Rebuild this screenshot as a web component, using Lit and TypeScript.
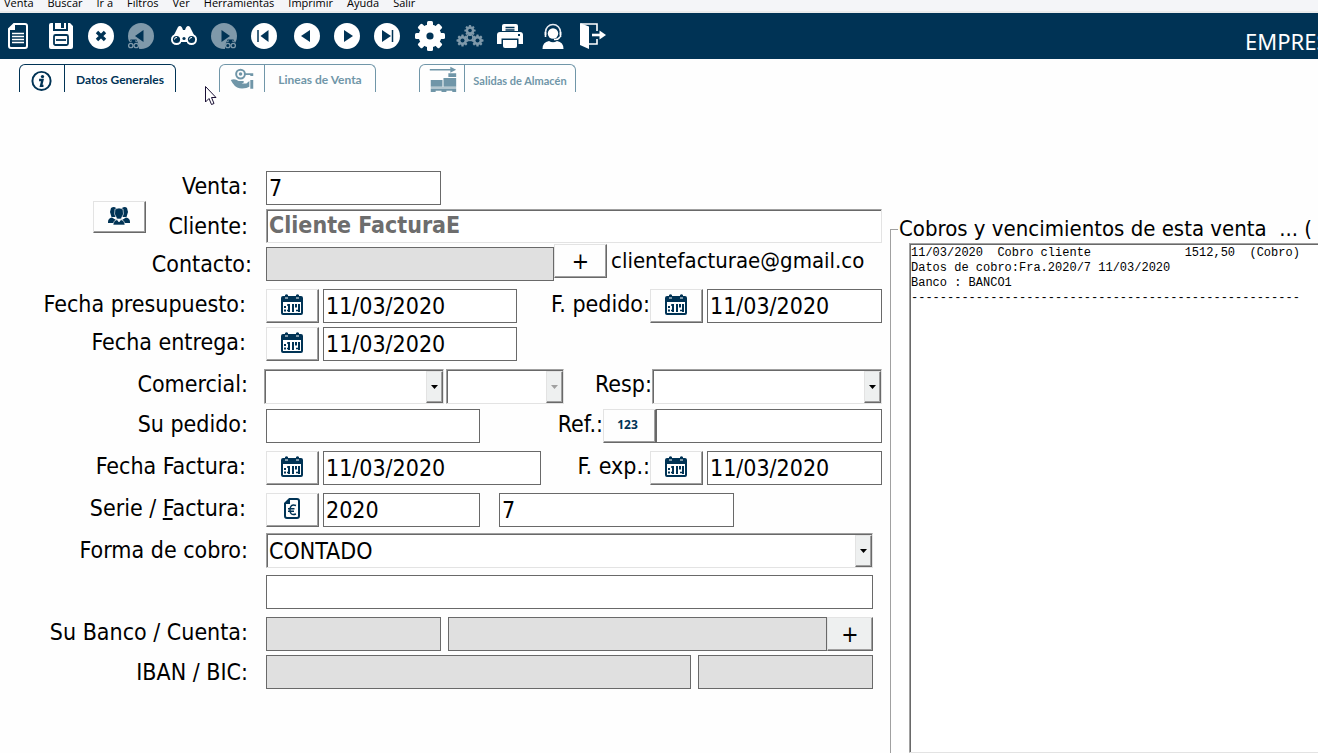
import { LitElement, html, css, svg } from "lit";
import { customElement, property } from "lit/decorators.js";
import { classMap } from "lit/directives/class-map.js";

const NAVY = "#003355";
const DIM = "#7f99aa";

const disc = (fill: string, inner: unknown) => svg`<circle cx="14" cy="14" r="13" fill=${fill} />${inner}`;

const miniBinoculars = (x: number) => svg`
  <g transform="translate(${x} 17)">
    <path d="M0 7 L2.5 .5 H8.500 L11 7 V10 H0Z" fill=${NAVY} />
    <circle cx="2.800" cy="6.500" r="2.200" fill=${NAVY} stroke=${DIM} stroke-width="1.300" />
    <circle cx="8.200" cy="6.500" r="2.200" fill=${NAVY} stroke=${DIM} stroke-width="1.300" />
    <path d="M2.500 3 L3.500 1.500 M8.500 3 L7.500 1.500" stroke=${DIM} stroke-width="1.300" />
  </g>`;

const gearPath = (cx: number, cy: number, r: number, tooth: number, fill: string, hole: number) => svg`
  <g transform="translate(${cx} ${cy})" fill=${fill}>
    ${[0, 45, 90, 135, 180, 225, 270, 315].map(
      (a) => svg`<rect x=${-tooth / 2} y=${-r} width=${tooth} height=${r} rx=${tooth / 4} transform="rotate(${a})" />`
    )}
    <circle r=${r * 0.76} />
    <circle r=${hole} fill=${NAVY} />
  </g>`;

const toolIcons: Record<string, unknown> = {
  doc: svg`
    <path d="M10 2 H21 Q23 2 23 4 V24 Q23 26 21 26 H7 Q5 26 5 24 V7Z" fill="none" stroke="#fff" stroke-width="2" />
    <path d="M4 8 L11 1 V8Z" fill="#fff" />
    <path d="M8 11.500 H20 M8 14.500 H20 M8 17.500 H20 M8 20.500 H20" stroke="#fff" stroke-width="1.500" />`,
  save: svg`
    <path d="M2 3 Q2 1 4 1 H6 V9 H21 V1 H23 L26 4 V25 Q26 27 24 27 H4 Q2 27 2 25Z" fill="#fff" />
    <path d="M8 1 H19 V7 H8Z" fill="#fff" />
    <rect x="14" y="1" width="3" height="5" fill=${NAVY} />
    <rect x="7" y="13" width="14" height="10" rx="1.500" fill="#fff" stroke=${NAVY} stroke-width="1.800" />
    <path d="M9 18 H19" stroke=${NAVY} stroke-width="1.800" />`,
  cancel: disc("#fff", svg`<path d="M10 10 L18 18 M18 10 L10 18" stroke=${NAVY} stroke-width="3.400" />`),
  findPrev: svg`${disc(DIM, svg`<path d="M16.500 8 V20 L8 14Z" fill=${NAVY} />`)}${miniBinoculars(1)}`,
  find: svg`
    <path d="M4 13 L8 5 Q10 3 12 5.500 L13 8 H15 L16 5.500 Q18 3 20 5 L24 13 L19 20 H9Z" fill="#fff" />
    <circle cx="6.500" cy="17.500" r="5.500" fill="#fff" /><circle cx="21.500" cy="17.500" r="5.500" fill="#fff" />
    <circle cx="6.500" cy="17.500" r="3.600" fill=${NAVY} /><circle cx="21.500" cy="17.500" r="3.600" fill=${NAVY} />
    <path d="M4.500 17.500 A2.200 2.200 0 0 1 7 15.500 M19.500 17.500 A2.200 2.200 0 0 1 22 15.500" stroke="#fff" fill="none" />
    <circle cx="14" cy="16.500" r="1.600" fill=${NAVY} /><path d="M11 20 H17 V24 H11Z" fill=${NAVY} />`,
  findNext: svg`${disc(DIM, svg`<path d="M11.500 8 V20 L20 14Z" fill=${NAVY} />`)}${miniBinoculars(15)}`,
  first: disc("#fff", svg`<path d="M18.500 8 V20 L10.500 14Z" fill=${NAVY} /><path d="M8 8 V20" stroke=${NAVY} stroke-width="1.500" />`),
  prev: disc("#fff", svg`<path d="M17 8 V20 L8 14Z" fill=${NAVY} />`),
  next: disc("#fff", svg`<path d="M11 8 V20 L20 14Z" fill=${NAVY} />`),
  last: disc("#fff", svg`<path d="M9 8 V20 L18 14Z" fill=${NAVY} /><path d="M19.500 8 V20" stroke=${NAVY} stroke-width="1.500" />`),
  gear: gearPath(14, 14, 15, 6, "#fff", 3.6),
  gears: svg`${gearPath(14, 8.5, 5.6, 2.2, DIM, 1.8)}${gearPath(6.5, 18.5, 6, 2.4, DIM, 2)}${gearPath(21.5, 18.5, 6, 2.4, DIM, 2)}
    <circle cx="14" cy="15.500" r="3" fill="none" stroke=${DIM} stroke-width="1.600" />`,
  print: svg`
    <path d="M6 9 V4 Q6 2 8 2 H20 Q22 2 22 4 V9Z" fill="#fff" />
    <path d="M9.500 5.500 H18.500 M9.500 8 H18.500" stroke=${NAVY} stroke-width="1.300" />
    <path d="M1 13 Q1 10 4 10 H24 Q27 10 27 13 V22 H1Z" fill="#fff" />
    <rect x="5.500" y="16.500" width="17" height="10" fill=${NAVY} />
    <path d="M7 18 H21 V24 Q21 26 19 26 H9 Q7 26 7 24Z" fill="#fff" />
    <rect x="22" y="12" width="2" height="2" fill=${NAVY} />`,
  agent: svg`
    <circle cx="14" cy="11.500" r="5.200" fill="#fff" />
    <path d="M6.500 13 V10 A7.500 7.500 0 0 1 21.500 10 V13" fill="none" stroke="#e6ebf2" stroke-width="1.600" />
    <path d="M6.500 10 V15 M21.500 10 V15 M21 15 Q19 18 15 17.500" fill="none" stroke="#fff" stroke-width="1.600" />
    <path d="M3.500 27 Q3.500 20 10 19 Q14 21.500 18 19 Q24.500 20 24.500 27Z" fill="#fff" />`,
  exit: svg`
    <path d="M1 1 L10 4.500 V27 L1 23Z" fill="#fff" />
    <path d="M2 2 H18 V9 M18 17 V22 H10" fill="none" stroke="#fff" stroke-width="1.600" />
    <path d="M13 13 H22" stroke="#fff" stroke-width="2.600" /><path d="M20.500 8.500 L27 13 L20.500 17.500Z" fill="#fff" />`,
};

const toolGroups: Array<Array<[string, string]>> = [
  [["doc", "Nuevo"]],
  [["save", "Guardar"], ["cancel", "Cancelar"], ["findPrev", "Buscar anterior"]],
  [["find", "Buscar"], ["findNext", "Buscar siguiente"], ["first", "Primero"]],
  [["prev", "Anterior"], ["next", "Siguiente"], ["last", "Último"]],
  [["gear", "Opciones"], ["gears", "Procesos"], ["print", "Imprimir"]],
  [["agent", "Soporte"], ["exit", "Salir"]],
];

const calendarIcon = svg`
  <svg width="22" height="21" viewBox="0 0 22 21" aria-hidden="true">
    <path d="M0 4 Q0 2 2 2 H4 V1 Q5.500 -.5 7 1 V2 H15 V1 Q16.500 -.5 18 1 V2 H20 Q22 2 22 4 V19 Q22 21 20 21 H2 Q0 21 0 19Z" fill=${NAVY} />
    <path d="M2 8 H20 V19 H2Z" fill="#fff" /><path d="M4 4 H7 M15 4 H18" stroke="#fff" stroke-width="1.200" />
    <path d="M3 13 H5 M3 16.500 H5 M8 10 V18 M12 10 V18 M15 10 V13.500 M18 10 V18" stroke=${NAVY} stroke-width="2" />
    <path d="M6 16.500 H8 M6 11 H8 M15 16.500 H18" stroke=${NAVY} stroke-width="1.600" />
  </svg>`;

const usersIcon = svg`
  <svg width="22" height="18" viewBox="0 0 22 18" aria-hidden="true" fill=${NAVY}>
    <path d="M3 1 Q6 -1 8 1 L7.500 10 H3.500 L2 5Z M14 1 Q17 -1 19 1 L20 5 L18.500 10 H14.500Z" />
    <path d="M0 15 Q0 11 4 10.500 L8 13 L6 16 H0Z M22 15 Q22 11 18 10.500 L14 13 L16 16 H22Z" />
    <path d="M7 2 Q11 0 15 2 L15.500 7 L13 12 H9 L6.500 7Z" stroke="#fff" stroke-width=".6" />
    <path d="M5 18 Q5 13.500 9 12.500 L11 15 L13 12.500 Q17 13.500 17 18Z" stroke="#fff" stroke-width=".6" />
  </svg>`;

const euroIcon = svg`
  <svg width="16" height="21" viewBox="0 0 16 21" aria-hidden="true" fill="none" stroke=${NAVY}>
    <path d="M5.500 1 H13 Q15 1 15 3 V18 Q15 20 13 20 H3 Q1 20 1 18 V5.500Z" stroke-width="2" />
    <path d="M1 6 L6 1 V6Z" fill=${NAVY} stroke="none" />
    <path d="M12 7.500 Q6 5.500 6 12 Q6 18 12 16 M4 10.800 H10.500 M4 13.300 H10" stroke-width="1.400" />
  </svg>`;

const sharedText = css`
  input, select, textarea, button { font: inherit; color: inherit; margin: 0; box-sizing: border-box; border-radius: 0; }
`;

@customElement("tool-bar")
class ToolBar extends LitElement {
  static styles = [sharedText, css`
    :host { display: flex; align-items: center; height: 46px; background: #003355; color: #fff; }
    .group { display: flex; margin-right: 3px; }
    .tool { width: 40px; height: 46px; border: 0; padding: 0; background: none; display: grid; place-items: center; }
    .tool.doc { width: 38px; padding-right: 2px; }
    .tool svg { overflow: visible; }
    .company { margin-left: auto; flex: 0 0 73px; overflow: hidden; white-space: nowrap; padding-top: 10px; font: 22px/28px "Noto Sans", sans-serif; }
  `];
  render() {
    return html`
      ${toolGroups.map((g) => html`<div class="group">
        ${g.map(([icon, label]) => html`<button class="tool ${icon}" aria-label=${label}>
          <svg width="28" height="28" viewBox="0 0 28 28" aria-hidden="true">${toolIcons[icon]}</svg>
        </button>`)}
      </div>`)}
      <div class="company">EMPRESA</div>`;
  }
}

@customElement("combo-box")
class ComboBox extends LitElement {
  @property() value = "";
  @property() label = "";
  @property({ type: Boolean }) disabled = false;
  static styles = [sharedText, css`
    :host { display: block; position: relative; height: 35px; box-sizing: border-box; background: #fff;
      border: 1px solid; border-color: #a0a0a0 #e3e3e3 #e3e3e3 #a0a0a0; box-shadow: inset 1px 1px #696969; }
    select { appearance: none; width: 100%; height: 33px; border: 0; background: none; padding: 0 20px 0 2px; opacity: 1; color: #000; }
    .arrow { position: absolute; top: 1px; right: 0; width: 17px; height: 32px; box-sizing: border-box; pointer-events: none;
      display: grid; place-items: center; background: #eef0f0; border: 1px solid; border-color: #e3e3e3 #696969 #696969 #e3e3e3;
      box-shadow: inset -1px -1px #a0a0a0; color: #000; }
    .arrow.off { color: #a0a0a0; }
  `];
  render() {
    return html`
      <select aria-label=${this.label} ?disabled=${this.disabled}><option>${this.value}</option></select>
      <span class=${classMap({ arrow: true, off: this.disabled })}>
        <svg width="7" height="4" viewBox="0 0 7 4" fill="currentColor" aria-hidden="true"><path d="M0 0 H7 L3.500 4Z" /></svg>
      </span>`;
  }
}

@customElement("sale-form")
class SaleForm extends LitElement {
  static styles = [sharedText, css`
    :host { display: flex; flex-direction: column; padding-top: 79px; }
    .row { display: flex; height: 34px; margin-bottom: 8px; padding-right: 8px; }
    .row.mid { margin-bottom: 6px; }
    .row.tight { margin-bottom: 4px; }
    .row.inset { padding-right: 17px; }
    .name { flex: 0 0 266px; box-sizing: border-box; padding-right: 18px; text-align: right; line-height: 30px; white-space: nowrap; }
    .name.close { padding-right: 14px; }
    .name.far { padding-right: 20px; }
    .name.low { line-height: 34px; }
    .withbutton { flex: 0 0 266px; display: flex; }
    .withbutton .name { flex: 1; }
    .withbutton .btn { margin: -8px 0 0 93px; height: 32px; }
    .second { margin-left: auto; line-height: 30px; white-space: nowrap; }
    .box { height: 34px; border: 1px solid #696969; background: #fff; padding: 0 2px; min-width: 0; }
    .box:disabled { background: #e0e0e0; }
    .sunken { border-color: #a0a0a0 #e3e3e3 #e3e3e3 #a0a0a0; box-shadow: inset 1px 1px #696969; font-weight: bold; color: #6d6d6d; padding-bottom: 2px; }
    .plain { border: 0; background: none; padding: 0; margin: 0 18px 0 4px; height: 28px; font-size: 22px; }
    .btn { flex: 0 0 53px; height: 34px; padding: 0 2px 3px 0; background: #fefefe; display: grid; place-items: center;
      border: 1px solid; border-color: #e3e3e3 #696969 #696969 #e3e3e3; box-shadow: inset -1px -1px #a0a0a0; }
    .btn.num { font: bold 12px/16px "Open Sans", sans-serif; color: #003355; padding-right: 4px; }
    .btn.shade { background: #eef0f0; flex-basis: 46px; padding: 0; }
    .btn.raise { margin-top: -3px; padding: 0; }
    .grow { flex: 1 1 0; }
    .w175 { width: 175px; }
    .w194 { width: 194px; }
    .w214 { width: 214px; }
    .w218 { width: 218px; }
    .w157 { width: 157px; }
    .w226 { width: 226px; }
    .w235 { width: 235px; }
    .w253 { width: 253px; }
    .gap { margin-left: 4px; }
    .gap7 { margin-left: 7px; }
    .gap19 { margin-left: 19px; }
    .c1 { width: 180px; margin-left: -2px; }
    .c2 { width: 118px; margin-left: 2px; }
    .c3 { width: 230px; }
  `];
  private dateButton(label: string) {
    return html`<button class="btn" aria-label=${label}>${calendarIcon}</button>`;
  }
  render() {
    return html`
      <div class="row tight"><label class="name" for="venta">Venta:</label><input id="venta" class="box w175" .value=${"7"} /></div>
      <div class="row tight">
        <div class="withbutton"><button class="btn" aria-label="Clientes">${usersIcon}</button><label class="name low" for="cliente">Cliente:</label></div>
        <input id="cliente" class="box sunken grow" .value=${"Cliente FacturaE"} />
      </div>
      <div class="row">
        <label class="name close low" for="contacto">Contacto:</label><input id="contacto" class="box grow" disabled />
        <button class="btn raise" aria-label="Añadir contacto">+</button>
        <input class="box plain w253" aria-label="Correo" .value=${"clientefacturae@gmail.com"} />
      </div>
      <div class="row tight">
        <label class="name far" for="fpres">Fecha presupuesto:</label>${this.dateButton("Elegir fecha de presupuesto")}
        <input id="fpres" class="box gap w194" .value=${"11/03/2020"} />
        <label class="second" for="fped">F. pedido:</label>${this.dateButton("Elegir fecha de pedido")}
        <input id="fped" class="box gap w175" .value=${"11/03/2020"} />
      </div>
      <div class="row">
        <label class="name far" for="fent">Fecha entrega:</label>${this.dateButton("Elegir fecha de entrega")}
        <input id="fent" class="box gap w194" .value=${"11/03/2020"} />
      </div>
      <div class="row mid">
        <span class="name">Comercial:</span>
        <combo-box class="c1" label="Comercial"></combo-box><combo-box class="c2" label="Subcomercial" disabled></combo-box>
        <span class="second">Resp:</span><combo-box class="c3" label="Resp"></combo-box>
      </div>
      <div class="row">
        <label class="name" for="sup">Su pedido:</label><input id="sup" class="box w214" />
        <label class="second" for="ref">Ref.:</label><button class="btn num" aria-label="Numerar">123</button><input id="ref" class="box w226" />
      </div>
      <div class="row">
        <label class="name far" for="ffac">Fecha Factura:</label>${this.dateButton("Elegir fecha de factura")}
        <input id="ffac" class="box gap w218" .value=${"11/03/2020"} />
        <label class="second" for="fexp">F. exp.:</label>${this.dateButton("Elegir fecha de expedición")}
        <input id="fexp" class="box gap w175" .value=${"11/03/2020"} />
      </div>
      <div class="row mid">
        <label class="name far" for="serie">Serie / <u>F</u>actura:</label><button class="btn" aria-label="Facturar">${euroIcon}</button>
        <input id="serie" class="box gap w157" .value=${"2020"} />
        <input class="box gap19 w235" aria-label="Factura" .value=${"7"} />
      </div>
      <div class="row inset"><span class="name low">Forma de cobro:</span><combo-box class="grow" label="Forma de cobro" value="CONTADO"></combo-box></div>
      <div class="row inset"><span class="name"></span><input class="box grow" aria-label="Detalle de cobro" /></div>
      <div class="row inset tight">
        <label class="name" for="banco">Su Banco / Cuenta:</label><input id="banco" class="box w175" disabled />
        <input class="box gap7 grow" aria-label="Cuenta" disabled /><button class="btn shade" aria-label="Añadir cuenta">+</button>
      </div>
      <div class="row inset">
        <label class="name low" for="iban">IBAN / BIC:</label><input id="iban" class="box grow" disabled />
        <input class="box gap7 w175" aria-label="BIC" disabled />
      </div>`;
  }
}

const tabIcons = [
  svg`<circle cx="22" cy="16" r="9.300" fill="none" stroke=${NAVY} stroke-width="2" />
    <circle cx="23" cy="11.500" r="1.700" fill=${NAVY} /><path d="M19.500 15 H23 L21.500 21 H24" fill="none" stroke=${NAVY} stroke-width="2.400" />`,
  svg`<circle cx="21" cy="9" r="4.500" fill="none" stroke="#7096a8" stroke-width="2" /><circle cx="21" cy="9" r="1.800" fill="#7096a8" />
    <path d="M25 8 H34 V11 H31 V10 H25Z" fill="#7096a8" />
    <path d="M11 15 Q15 13 19 16 H24 Q25.500 18 22 18.500 H27 L30 16 V22 Q27 24 20 23.500 Q15 23 11 15Z M31 15 H34 V24 H31Z" fill="#7096a8" />`,
  svg`<path d="M10 4.500 H34" stroke="#7096a8" stroke-width="1.400" /><path d="M31 1.500 L37 4.500 L31 7.500Z" fill="#7096a8" />
    <path d="M11 15 H23 V22 H11Z M24 13 H37 V22 H24Z M29 8 H37 V12 H29Z" fill="#7096a8" /><path d="M11 22 H37 V24 H11Z" fill="#b4c6cf" />
    <path d="M11 24 H37 V28 H33 V26 H27 V28 H22 V26 H16 V28 H11Z" fill="#7096a8" />`,
];

@customElement("app-root")
class AppRoot extends LitElement {
  static styles = [sharedText, css`
    :host { display: flex; flex-direction: column; min-height: 100vh; overflow: hidden; position: relative; background: #fefefe;
      color: #000; font: 23px/28px "DejaVu Sans Condensed", "DejaVu Sans", sans-serif; }
    .menu { display: flex; align-items: flex-end; gap: 14px; height: 13px; box-sizing: border-box; overflow: hidden; padding-left: 4px;
      background: #f4f5f8; border-bottom: 2px solid #e9ebec; font: 11px/17px "Open Sans", sans-serif; }
    .menu a { color: #000; text-decoration: none; white-space: nowrap; }
    .tabs { display: flex; gap: 43px; padding: 5px 0 0 19px; height: 33px; box-sizing: border-box; }
    .tab { display: flex; width: 157px; height: 28px; padding: 0; background: none; border: 1px solid #7096a8; border-bottom: 0;
      border-radius: 6px 6px 0 0; color: #7096a8; font: bold 12px/30px Lato, sans-serif; overflow: hidden; }
    .tab.on { color: #003355; border-color: #003355; }
    .tab.small { font-size: 11px; line-height: 32px; }
    .tab svg { flex: 0 0 45px; box-sizing: border-box; border-right: 1px solid currentColor; }
    .tab span { flex: 1; text-align: center; white-space: nowrap; }
    .main { flex: 1; display: grid; grid-template-columns: 890fr 428fr; }
    .side { display: flex; min-width: 0; padding-top: 123px; overflow: hidden; }
    fieldset { flex: 1; min-width: 0; display: flex; margin: 0; padding: 0 0 0 7px; border: 1px solid #a0a0a0; border-width: 1px 0 0 1px; }
    legend { padding: 0 1px; white-space: pre; height: 28px; font-size: 22px; }
    textarea { flex: 1; resize: none; margin: 0 0 0 11px; padding: 2px 1px; background: #fff; outline: 0; overflow: hidden; white-space: pre;
      border: 1px solid; border-color: #a0a0a0 #a0a0a0 #e3e3e3 #a0a0a0; border-right: 0; box-shadow: inset 1px 1px #696969; font: 12px/15px "Liberation Mono", monospace; }
    .cursor { position: absolute; left: 205px; top: 86px; }
  `];
  render() {
    const menu = ["Venta", "Buscar", "Ir a", "Filtros", "Ver", "Herramientas", "Imprimir", "Ayuda", "Salir"];
    const tabs = ["Datos Generales", "Lineas de Venta", "Salidas de Almacén"];
    const log = [
      "11/03/2020  Cobro cliente             1512,50  (Cobro)",
      "Datos de cobro:Fra.2020/7 11/03/2020",
      "Banco : BANCO1",
      "-".repeat(54),
    ].join("\n");
    return html`
      <nav class="menu">${menu.map((m) => html`<a href="#">${m}</a>`)}</nav>
      <tool-bar></tool-bar>
      <div class="tabs">
        ${tabs.map((t, i) => html`<button class=${classMap({ tab: true, on: i === 0, small: i === 2 })}>
          <svg width="45" height="28" viewBox="0 0 45 28" aria-hidden="true">${tabIcons[i]}</svg><span>${t}</span>
        </button>`)}
      </div>
      <div class="main">
        <sale-form></sale-form>
        <div class="side">
          <fieldset>
            <legend>${"Cobros y vencimientos de esta venta  ... ( "}</legend>
            <textarea readonly aria-label="Cobros y vencimientos" .value=${log}></textarea>
          </fieldset>
        </div>
      </div>
      <svg class="cursor" width="12" height="20" viewBox="0 0 12 20" aria-hidden="true">
        <path d="M.5 .5 V16 L4 12.500 L6.500 18.500 L9 17.500 L6.500 11.500 H11Z" fill="#fff" stroke="#1a1035" />
      </svg>`;
  }
}
